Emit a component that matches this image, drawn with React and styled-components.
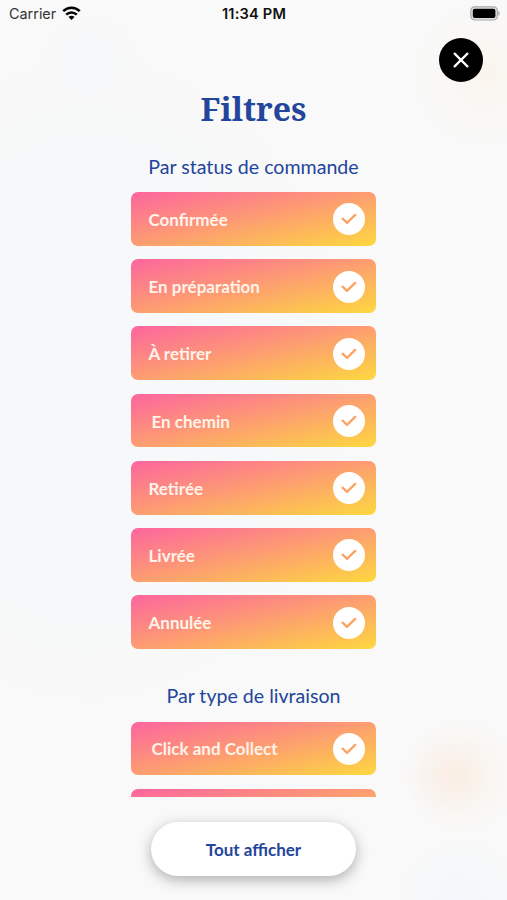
import styled, { createGlobalStyle } from "styled-components";

const GlobalStyle = createGlobalStyle`
  * {
    box-sizing: border-box;
  }

  body {
    margin: 0;
    background-color: #f9f9f9;
  }
`;

const Screen = styled.div`
  display: flex;
  flex-direction: column;
  align-items: center;
  width: 507px;
  height: 900px;
  overflow: hidden;
  font-family: Lato, sans-serif;
  color: #23459b;
  background:
    radial-gradient(circle at 448px 774px, rgba(255, 190, 170, 0.12), rgba(255, 190, 170, 0.06) 24px, transparent 46px),
    radial-gradient(circle at 462px 776px, rgba(255, 210, 150, 0.16), rgba(255, 210, 150, 0.08) 28px, transparent 58px),
    radial-gradient(circle at 486px 74px, rgba(255, 220, 160, 0.14), rgba(255, 220, 160, 0.05) 38px, transparent 76px),
    radial-gradient(circle at 90px 62px, rgba(235, 243, 255, 0.2), transparent 50px),
    radial-gradient(ellipse at 90px 380px, rgba(242, 247, 252, 0.5), transparent 300px),
    radial-gradient(circle at 460px 900px, rgba(232, 242, 252, 0.35), transparent 65px),
    #f9f9f9;
`;

const StatusBar = styled.div`
  display: grid;
  grid-template-columns: 1fr auto 1fr;
  align-items: center;
  width: 100%;
  height: 27px;
  padding: 0 7px 0 9px;
  font-family: Inter, sans-serif;
  font-size: 14.6px;
  color: #111;
`;

const Carrier = styled.div`
  display: flex;
  align-items: center;
  gap: 6px;
  font-size: 14.4px;
  color: #333;
`;

const Time = styled.div`
  margin-right: 1px;
  font-weight: 600;
  letter-spacing: 0.2px;
`;

const Battery = styled.svg`
  justify-self: end;
`;

const TopBar = styled.div`
  display: flex;
  justify-content: flex-end;
  width: 100%;
  height: 55px;
  padding: 10.5px 24.5px 0 0;
`;

const CloseButton = styled.button`
  display: flex;
  align-items: center;
  justify-content: center;
  width: 44px;
  height: 44px;
  padding: 0;
  border: none;
  border-radius: 50%;
  background-color: #000;
  cursor: pointer;
`;

const Title = styled.h1`
  margin: 7px 0 1px;
  font-family: "Noto Serif", "DejaVu Serif Condensed", "DejaVu Serif", serif;
  font-size: 32px;
  font-weight: 700;
  line-height: 40px;
`;

const List = styled.div`
  width: 245px;
  height: 667px;
  overflow: hidden;
`;

const Section = styled.section`
  display: flex;
  flex-direction: column;
  gap: 13.5px;
  margin-bottom: 32.5px;
`;

const SectionTitle = styled.h2`
  margin: 25px 0 -0.4px;
  font-size: 19.6px;
  font-weight: 400;
  line-height: 24px;
  text-align: center;
  white-space: nowrap;

  ${Section} + ${Section} & {
    margin-top: 3px;
  }
`;

const Option = styled.button`
  display: flex;
  flex-shrink: 0;
  align-items: center;
  justify-content: space-between;
  width: 100%;
  height: 53.7px;
  padding: 1px 11px 0 ${(props) => (props.$indent ? "20.5px" : "17.5px")};
  border: none;
  border-radius: 7px;
  background: linear-gradient(to bottom right, #fd659f, #fd9d71 50%, #fdd83f);
  font-family: inherit;
  font-size: 17px;
  font-weight: 700;
  color: #fff3ea;
  cursor: pointer;
`;

const Check = styled.span`
  display: flex;
  align-items: center;
  justify-content: center;
  width: 32px;
  height: 32px;
  border-radius: 50%;
  background-color: #fff;
`;

const ShowAll = styled.button`
  width: 205px;
  height: 54px;
  margin-top: 25px;
  border: none;
  border-radius: 27px;
  background-color: #fff;
  box-shadow: 0 4px 14px rgba(0, 0, 0, 0.3);
  font-family: inherit;
  font-size: 17px;
  font-weight: 700;
  color: #23459b;
  cursor: pointer;
`;

const sections = [
  {
    title: "Par status de commande",
    options: [
      { label: "Confirmée" },
      { label: "En préparation" },
      { label: "À retirer" },
      { label: "En chemin", indent: true },
      { label: "Retirée" },
      { label: "Livrée" },
      { label: "Annulée" },
    ],
  },
  {
    title: "Par type de livraison",
    options: [{ label: "Click and Collect", indent: true }, { label: "" }],
  },
];

const App = () => {
  return (
    <Screen>
      <GlobalStyle />
      <StatusBar>
        <Carrier>
          Carrier
          <svg width="19" height="15" viewBox="0 0 19 15" fill="none" stroke="#000" strokeWidth="2.5">
            <path d="M1.2 5.2C6 .6 13 .6 17.8 5.2" />
            <path d="M4.2 8.6C7.2 5.7 11.8 5.7 14.8 8.6" />
            <path d="M9.5 14 6.5 11C8.2 9.4 10.8 9.4 12.5 11Z" fill="#000" stroke="none" />
          </svg>
        </Carrier>
        <Time>11:34 PM</Time>
        <Battery width="30" height="15" viewBox="0 0 30 15">
          <rect x="0.8" y="0.8" width="26.6" height="13.2" rx="4" fill="#e0e0e0" stroke="#aaa" strokeWidth="1.2" />
          <rect x="2.8" y="2.8" width="22.6" height="9.2" rx="2" fill="#000" />
          <path d="M28.4 5c1.8.6 1.8 4.2 0 4.8z" fill="#aaa" />
        </Battery>
      </StatusBar>
      <TopBar>
        <CloseButton aria-label="Fermer">
          <svg width="16" height="16" viewBox="0 0 16 16" stroke="#fff" strokeWidth="2.2" strokeLinecap="round">
            <path d="M1.6 1.6 14.4 14.4M14.4 1.6 1.6 14.4" />
          </svg>
        </CloseButton>
      </TopBar>
      <Title>Filtres</Title>
      <List>
        {sections.map((section) => (
          <Section key={section.title}>
            <SectionTitle>{section.title}</SectionTitle>
            {section.options.map((option) => (
              <Option key={option.label} $indent={option.indent}>
                {option.label}
                <Check>
                  <svg width="16" height="12" viewBox="0 0 16 12" fill="none" stroke="#fda263" strokeWidth="2.3" strokeLinecap="round" strokeLinejoin="round">
                    <path d="M1.6 5.7 6 9.9 14.2 1.9" />
                  </svg>
                </Check>
              </Option>
            ))}
          </Section>
        ))}
      </List>
      <ShowAll>Tout afficher</ShowAll>
    </Screen>
  );
};

export default App;
